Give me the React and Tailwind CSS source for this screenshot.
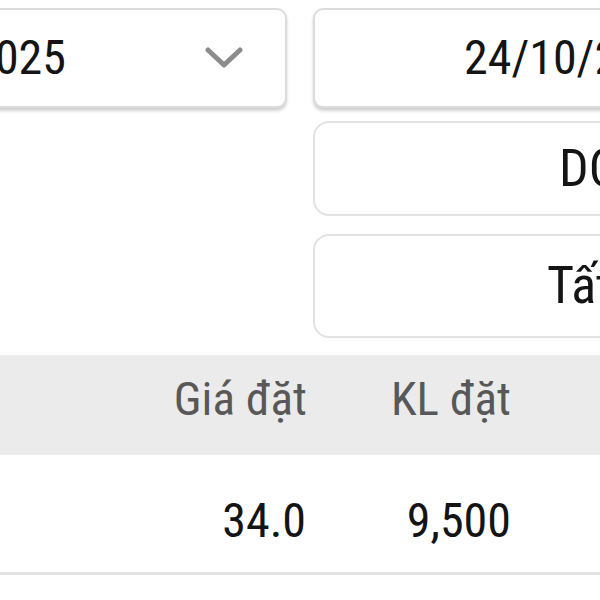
import React from 'react';

const font = { fontFamily: "'Roboto Condensed', Roboto, 'Liberation Sans', sans-serif" };

const Chevron = () => (
  <svg width="38" height="22" viewBox="0 0 38 22" fill="none">
    <path d="M3 3 L19 18 L35 3" stroke="#8c8c8c" strokeWidth="5" strokeLinecap="round" strokeLinejoin="round" />
  </svg>
);

const App = () => {
  return (
    <div className="w-[600px] h-[600px] overflow-hidden bg-white text-[#141414]" style={font}>
      {/* Filters */}
      <div className="flex gap-[26px] pt-[8px] pb-[17px]">
        <div className="-ml-[200px] w-[487px] flex-shrink-0">
          <div className="h-[100px] flex items-center border-2 border-[#dcdcdc] rounded-[10px] shadow-[0_3px_3px_rgba(0,0,0,0.18)] bg-white">
            <div className="w-[264px] text-right text-[48px] leading-none">24/09/2025</div>
            <div className="ml-[139px]">
              <Chevron />
            </div>
          </div>
        </div>
        <div className="w-[500px] flex-shrink-0 flex flex-col">
          <div className="h-[100px] flex items-center pl-[149px] border-2 border-[#dcdcdc] rounded-[10px] shadow-[0_3px_3px_rgba(0,0,0,0.18)] bg-white text-[48px] leading-none">
            24/10/2025
          </div>
          <div className="mt-[13px] h-[95px] flex items-center pl-[244px] border-2 border-[#e2e2e2] rounded-[16px] text-[52px] leading-none">
            DCDS
          </div>
          <div className="mt-[18px] h-[104px] flex items-center pl-[232px] border-2 border-[#e2e2e2] rounded-[16px] text-[52px] leading-none">
            Tất cả
          </div>
        </div>
      </div>

      {/* Table header */}
      <div className="h-[100px] bg-[#ebebeb] flex items-center pb-[14px] text-[#585858] text-[47px] leading-none">
        <div className="w-[307px] flex-shrink-0 text-right">Giá đặt</div>
        <div className="w-[204px] flex-shrink-0 text-right">KL đặt</div>
      </div>

      {/* Row */}
      <div className="h-[120px] flex items-center pt-[14px] border-b-[3px] border-[#e3e3e3] text-[48px] leading-none">
        <div className="w-[306px] flex-shrink-0 text-right">34.0</div>
        <div className="w-[205px] flex-shrink-0 text-right">9,500</div>
      </div>
    </div>
  );
};

export default App;
